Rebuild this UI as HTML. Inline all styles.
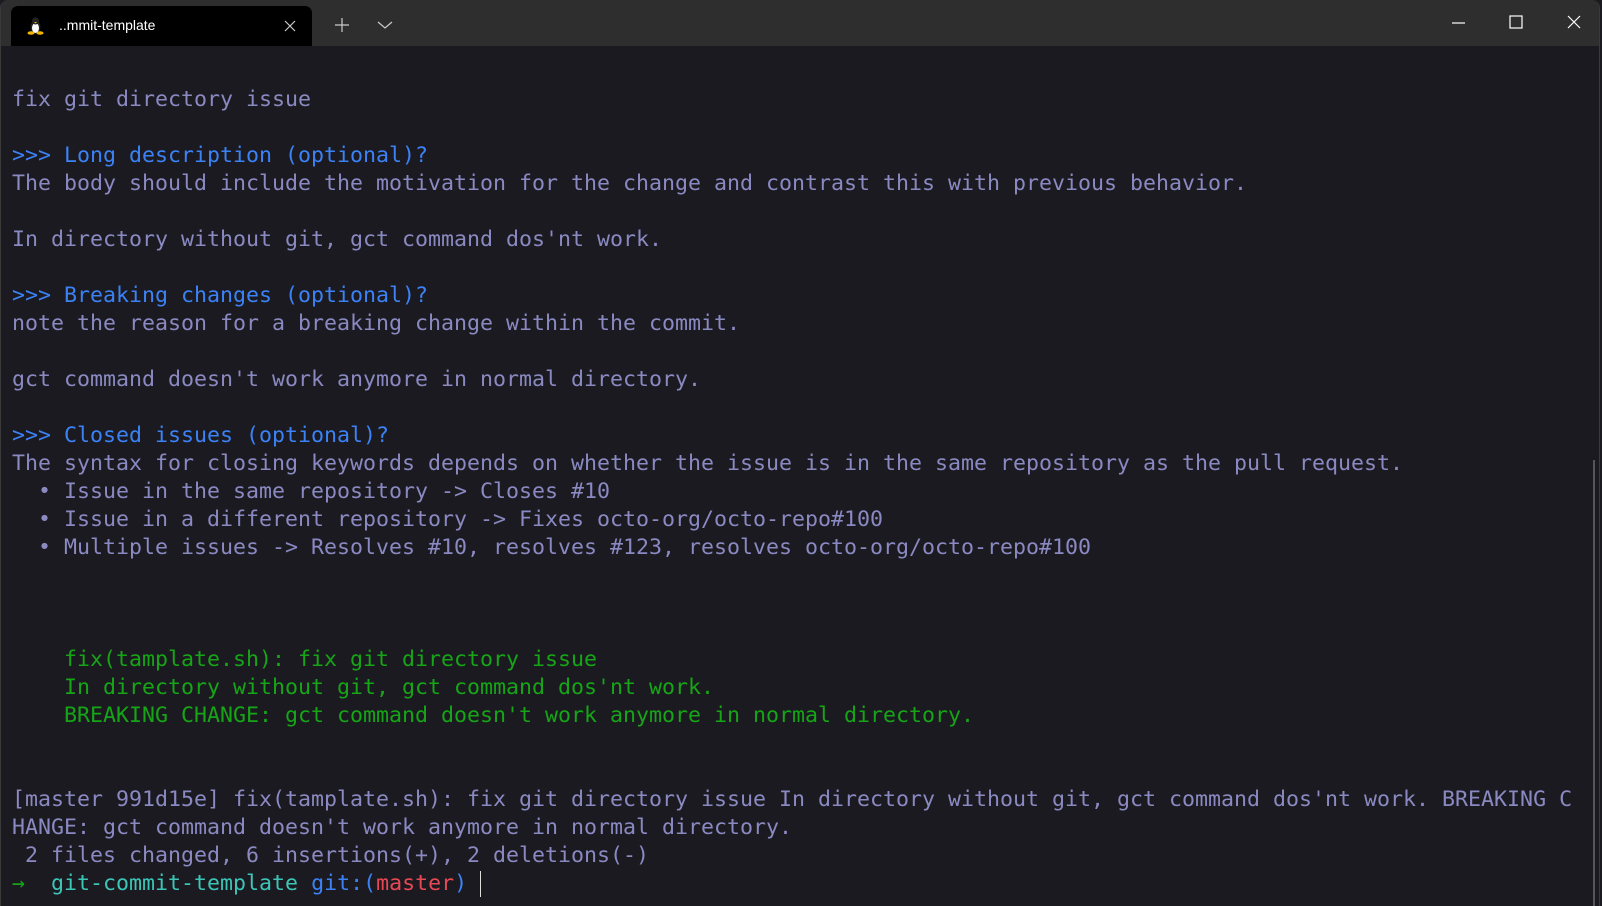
<!DOCTYPE html>
<html><head><meta charset="utf-8"><style>
html,body{margin:0;padding:0;width:1602px;height:906px;overflow:hidden;background:#1b1a20;}
.win{position:absolute;left:0;top:0;width:1600px;height:906px;background:#1b1a20;border-left:1px solid #3a3a3a;border-right:1px solid #3a3a3a;border-radius:8px 8px 0 0;box-sizing:border-box;overflow:hidden}
.bar{position:absolute;left:0;top:0;right:0;height:46px;background:#2e2e2e;}
.tab{position:absolute;left:10px;top:6px;width:301px;height:40px;background:#000;border-radius:7px 7px 0 0;}
.tab .t{position:absolute;left:48px;top:11px;color:#fff;font:14px "Liberation Sans",sans-serif;}
.tab .x{position:absolute;left:272px;top:13px}
pre{position:absolute;left:11px;top:86px;margin:0;font-family:"DejaVu Sans Mono","Liberation Mono",monospace;font-size:21.6px;line-height:28px;color:#8a89c2;white-space:pre;}
.b{color:#3b82f6}.g{color:#16a516}.c{color:#3cc6b8}.r{color:#e84855}.ar{color:#16a516}
.cur{display:inline-block;width:1px;height:26px;background:#ddd;vertical-align:middle}
.sb{position:absolute;right:4px;top:460px;width:2px;height:446px;background:#555}
</style></head><body><div class="win">
<div class="bar">
<div class="tab">
<svg style="position:absolute;left:16px;top:11px" width="17" height="18" viewBox="0 0 17 18"><ellipse cx="8.5" cy="10" rx="5" ry="6.5" fill="#222"/><ellipse cx="8.5" cy="11" rx="3.5" ry="5" fill="#fff"/><circle cx="8.5" cy="4" r="3.5" fill="#222"/><path d="M7 5 L8.5 6.5 L10 5Z" fill="#f5b400"/><ellipse cx="4" cy="16" rx="3.5" ry="1.8" fill="#f5b400"/><ellipse cx="13" cy="16" rx="3.5" ry="1.8" fill="#f5b400"/></svg>
<span class="t">..mmit-template</span>
<svg class="x" width="14" height="14" viewBox="0 0 14 14"><path d="M2 2L12 12M12 2L2 12" stroke="#ccc" stroke-width="1.2"/></svg>
</div>
<svg style="position:absolute;left:333px;top:17px" width="16" height="16"><path d="M8 1V15M1 8H15" stroke="#ccc" stroke-width="1.2"/></svg>
<svg style="position:absolute;left:376px;top:20px" width="16" height="10"><path d="M1 2L8 8L15 2" stroke="#ccc" stroke-width="1.2" fill="none"/></svg>
<svg style="position:absolute;left:1451px;top:18px" width="14" height="10"><path d="M0 5H13" stroke="#fff" stroke-width="1.2"/></svg>
<svg style="position:absolute;left:1508px;top:15px" width="14" height="14"><rect x="1" y="1" width="12" height="12" stroke="#fff" stroke-width="1.2" fill="none"/></svg>
<svg style="position:absolute;left:1566px;top:15px" width="14" height="14"><path d="M1 1L13 13M13 1L1 13" stroke="#fff" stroke-width="1.2"/></svg>
</div>
<pre>fix git directory issue

<span class="b">&gt;&gt;&gt; Long description (optional)?</span>
The body should include the motivation for the change and contrast this with previous behavior.

In directory without git, gct command dos'nt work.

<span class="b">&gt;&gt;&gt; Breaking changes (optional)?</span>
note the reason for a breaking change within the commit.

gct command doesn't work anymore in normal directory.

<span class="b">&gt;&gt;&gt; Closed issues (optional)?</span>
The syntax for closing keywords depends on whether the issue is in the same repository as the pull request.
  • Issue in the same repository -&gt; Closes #10
  • Issue in a different repository -&gt; Fixes octo-org/octo-repo#100
  • Multiple issues -&gt; Resolves #10, resolves #123, resolves octo-org/octo-repo#100



<span class="g">    fix(tamplate.sh): fix git directory issue
    In directory without git, gct command dos'nt work.
    BREAKING CHANGE: gct command doesn't work anymore in normal directory.</span>


[master 991d15e] fix(tamplate.sh): fix git directory issue In directory without git, gct command dos'nt work. BREAKING C
HANGE: gct command doesn't work anymore in normal directory.
 2 files changed, 6 insertions(+), 2 deletions(-)
<span class="ar">→</span>  <span class="c">git-commit-template</span> <span class="b">git:(</span><span class="r">master</span><span class="b">)</span> <span class="cur"></span></pre>
<div class="sb"></div>
</div></body></html>
